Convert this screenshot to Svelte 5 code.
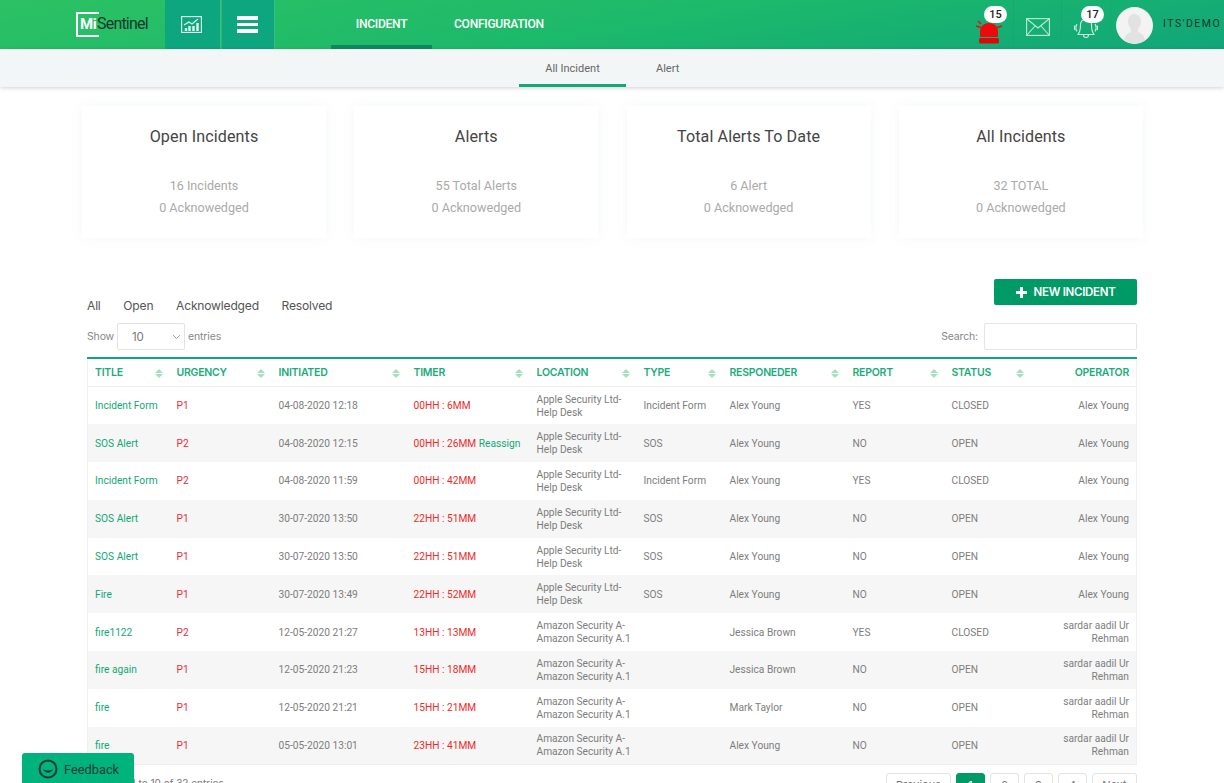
<script>
  const cards = [
    { t: 'Open Incidents', a: '16 Incidents', b: '0 Acknowedged' },
    { t: 'Alerts', a: '55 Total Alerts', b: '0 Acknowedged' },
    { t: 'Total Alerts To Date', a: '6 Alert', b: '0 Acknowedged' },
    { t: 'All Incidents', a: '32 TOTAL', b: '0 Acknowedged' }
  ];
  const heads = ['TITLE', 'URGENCY', 'INITIATED', 'TIMER', 'LOCATION', 'TYPE', 'RESPONEDER', 'REPORT', 'STATUS'];
  const A = 'Apple Security Ltd-Help Desk';
  const Z = 'Amazon Security A-Amazon Security A.1';
  const S = 'sardar aadil Ur Rehman';
  const rows = [
    ['Incident Form', 'P1', '04-08-2020 12:18', '00HH : 6MM', A, 'Incident Form', 'Alex Young', 'YES', 'CLOSED', 'Alex Young'],
    ['SOS Alert', 'P2', '04-08-2020 12:15', '00HH : 26MM', A, 'SOS', 'Alex Young', 'NO', 'OPEN', 'Alex Young', true],
    ['Incident Form', 'P2', '04-08-2020 11:59', '00HH : 42MM', A, 'Incident Form', 'Alex Young', 'YES', 'CLOSED', 'Alex Young'],
    ['SOS Alert', 'P1', '30-07-2020 13:50', '22HH : 51MM', A, 'SOS', 'Alex Young', 'NO', 'OPEN', 'Alex Young'],
    ['SOS Alert', 'P1', '30-07-2020 13:50', '22HH : 51MM', A, 'SOS', 'Alex Young', 'NO', 'OPEN', 'Alex Young'],
    ['Fire', 'P1', '30-07-2020 13:49', '22HH : 52MM', A, 'SOS', 'Alex Young', 'NO', 'OPEN', 'Alex Young'],
    ['fire1122', 'P2', '12-05-2020 21:27', '13HH : 13MM', Z, '', 'Jessica Brown', 'YES', 'CLOSED', S],
    ['fire again', 'P1', '12-05-2020 21:23', '15HH : 18MM', Z, '', 'Jessica Brown', 'NO', 'OPEN', S],
    ['fire', 'P1', '12-05-2020 21:21', '15HH : 21MM', Z, '', 'Mark Taylor', 'NO', 'OPEN', S],
    ['fire', 'P1', '05-05-2020 13:01', '23HH : 41MM', Z, '', 'Alex Young', 'NO', 'OPEN', S]
  ];
</script>

<div class="page">
  <header class="top">
    <div class="logo">
      <span class="mark">Mi</span><span class="word">Sentinel</span>
    </div>
    <div class="square first">
      <svg width="21" height="17" viewBox="0 0 21 17" fill="none" stroke="#e6f7f0" stroke-width="1.1">
        <rect x="0.6" y="0.6" width="19.8" height="15.8" />
        <path d="M3 9 L8 6 L11 8 L17 3" />
        <path d="M5 15v-3M8.500 15v-5M12.500 15v-5M16.500 15v-8" stroke-width="2.400" />
      </svg>
    </div>
    <div class="square second">
      <span class="burger"><i></i><i></i><i></i></span>
    </div>
    <nav class="mainnav">
      <a class="active">INCIDENT</a>
      <a class="config">CONFIGURATION</a>
    </nav>
    <div class="right">
      <div class="ic siren">
        <svg width="26" height="24" viewBox="0 0 26 24">
          <path d="M4 17v-6a9 8 0 0 1 18 0v6z" fill="#ee0a0a" />
          <rect x="3" y="18" width="20" height="5.500" rx="1.500" fill="#d80a0a" />
          <path d="M0 6l5 1.500M2 1l3 3M26 6l-5 1.500" stroke="#ee0a0a" stroke-width="1.400" fill="none" />
        </svg>
        <span class="badge b1">15</span>
      </div>
      <div class="ic mail">
        <svg width="24" height="18" viewBox="0 0 24 18" fill="none" stroke="#b9ecd4" stroke-width="1.100">
          <rect x="0.600" y="0.600" width="22.800" height="16.800" />
          <path d="M1 1l11 9 11-9M1 17l8-9M23 17l-8-9" />
        </svg>
      </div>
      <div class="ic bell">
        <svg width="24" height="21" viewBox="0 0 24 21" fill="none" stroke="#cdf2e0" stroke-width="1.100">
          <path d="M12 1a5.500 5.500 0 0 0-5.500 5.500c0 6-1 8-2.500 10h16c-1.500-2-2.500-4-2.500-10A5.500 5.500 0 0 0 12 1zM9.500 17a2.500 2.500 0 0 0 5 0" />
          <path d="M3 6c-1.500 2.500-1.500 5 0 7.500M21 6c1.500 2.500 1.500 5 0 7.500M1 7.500c-.8 1.500-.8 3 0 4.500M23 7.500c.8 1.500.8 3 0 4.500" />
        </svg>
        <span class="badge b2">17</span>
      </div>
      <div class="user">
        <span class="avatar">
          <svg width="37" height="37" viewBox="0 0 37 37">
            <circle cx="18.500" cy="18.500" r="18.500" fill="#f3f3f3" />
            <path d="M8 33c1-6 5-7 7-8v-3c-2-2-3-5-3-8 0-4 3-7 6.500-7s6.500 3 6.500 7c0 3-1 6-3 8v3c2 1 6 2 7 8a18 18 0 0 1-21 0z" fill="#e2e2e2" />
          </svg>
        </span>
        <span class="uname">ITS'DEMO</span>
      </div>
    </div>
  </header>

  <div class="subnav">
    <a class="sub active">All Incident</a>
    <a class="sub alert">Alert</a>
  </div>

  <main>
    <section class="cards">
      {#each cards as c}
        <div class="card">
          <h3>{c.t}</h3>
          <p>{c.a}</p>
          <p>{c.b}</p>
        </div>
      {/each}
    </section>

    <div class="filters">
      <div class="tabs">
        <span>All</span><span>Open</span><span>Acknowledged</span><span>Resolved</span>
      </div>
      <button class="new"><span class="plus"></span>NEW INCIDENT</button>
    </div>

    <div class="controls">
      <div class="show">
        Show
        <span class="select">10
          <svg width="9" height="6" viewBox="0 0 9 6" fill="none" stroke="#aaa"><path d="M1 1l3.500 3.500L8 1" /></svg>
        </span>
        entries
      </div>
      <div class="search">Search:<span class="input"></span></div>
    </div>

    <table>
      <colgroup>
        <col style="width:82px" /><col style="width:102px" /><col style="width:135px" /><col style="width:123px" /><col style="width:107px" /><col style="width:86px" /><col style="width:123px" /><col style="width:99px" /><col style="width:86px" /><col />
      </colgroup>
      <thead>
        <tr>
          {#each heads as h}
            <th>{h}<span class="sort"><i class="up"></i><i class="down"></i></span></th>
          {/each}
          <th class="r">OPERATOR</th>
        </tr>
      </thead>
      <tbody>
        {#each rows as r}
          <tr>
            <td class="title">{r[0]}</td>
            <td class="urg">{r[1]}</td>
            <td>{r[2]}</td>
            <td class="timer">{r[3]}{#if r[10]}&nbsp;<span class="title">Reassign</span>{/if}</td>
            <td class="loc">{r[4]}</td>
            <td>{r[5]}</td>
            <td>{r[6]}</td>
            <td>{r[7]}</td>
            <td>{r[8]}</td>
            <td class="r">{r[9]}</td>
          </tr>
        {/each}
      </tbody>
    </table>

    <div class="foot">
      <span class="info">Showing 1 to 10 of 32 entries</span>
      <div class="pager">
        <span class="pg prev">Previous</span>
        <span class="pg cur">1</span>
        <span class="pg">2</span>
        <span class="pg">3</span>
        <span class="pg">4</span>
        <span class="pg next">Next</span>
      </div>
    </div>
  </main>

  <div class="feedback">
    <svg width="20" height="20" viewBox="0 0 20 20" fill="none">
      <circle cx="10" cy="10" r="8.500" stroke="#1f3b3a" stroke-width="2" />
      <path d="M5 10c2 5 8 5 10 0-3 2-7 2-10 0z" fill="#1f3b3a" />
    </svg>
    Feedback
  </div>
</div>

<style>
  :global(body) {
    margin: 0;
    background: #fff;
    overflow: hidden;
  }
  .page {
    height: 783px;
    overflow: hidden;
    position: relative;
    font-family: Roboto, "Liberation Sans", sans-serif;
    color: #777;
  }
  .top {
    height: 49px;
    display: flex;
    align-items: stretch;
    background: linear-gradient(170deg, #2cc163 0%, #1db96b 50%, #10a67a 100%);
  }
  .logo {
    width: 165px;
    box-sizing: border-box;
    padding: 11px 0 0 76px;
    display: flex;
    align-items: flex-start;
    flex: none;
  }
  .logo .mark {
    box-sizing: border-box;
    width: 23px;
    height: 25px;
    margin-top: 1px;
    border: 2px solid #fff;
    border-right: 0;
    color: #fff;
    font-weight: 700;
    font-size: 15px;
    line-height: 21px;
    padding-left: 2px;
    letter-spacing: -0.5px;
    white-space: nowrap;
  }
  .logo .word {
    color: #16392c;
    margin-left: -2px;
    font-size: 16px;
    line-height: 26px;
    letter-spacing: -0.8px;
  }
  .square {
    background: #0ea67f;
    display: flex;
    align-items: center;
    justify-content: center;
    box-sizing: border-box;
    flex: none;
    border-right: 1px solid #3dbb8a;
  }
  .square.first { width: 56px; padding-right: 2px; }
  .square.second { width: 53px; padding-right: 2px; margin-left: 1px; }
  .burger { display: flex; flex-direction: column; gap: 3px; }
  .burger i { display: block; width: 21px; height: 3.500px; background: #fff; }
  .mainnav {
    display: flex;
    margin-left: 56px;
    color: #fff;
    font-size: 12.100px;
    font-weight: 500;
  }
  .mainnav a {
    display: block;
    box-sizing: border-box;
    height: 49px;
    line-height: 49px;
    letter-spacing: -0.3px;
    white-space: nowrap;
  }
  .mainnav .active {
    width: 101px;
    text-align: center;
    border-bottom: 4px solid #0c8a5d;
  }
  .mainnav .config { margin-left: 22px; }
  .right {
    margin-left: auto;
    display: flex;
    align-items: stretch;
  }
  .ic {
    position: relative;
    display: flex;
    align-items: center;
    justify-content: center;
    box-sizing: border-box;
    border-right: 1px solid #17a86b;
  }
  .siren { width: 46px; }
  .siren svg { margin-top: 15px; margin-left: -4px; }
  .mail { width: 48px; }
  .mail svg { margin-top: 4px; }
  .bell { width: 49px; }
  .bell svg { margin-top: 7px; }
  .badge {
    position: absolute;
    top: 6px;
    background: #fff;
    color: #222;
    font-size: 11px;
    font-weight: 500;
    width: 23px;
    height: 17px;
    line-height: 17px;
    text-align: center;
    border-radius: 9px;
  }
  .b1 { left: 16px; }
  .b2 { left: 19px; }
  .user {
    width: 113px;
    display: flex;
    align-items: center;
    padding-left: 5px;
    overflow: hidden;
    box-sizing: border-box;
  }
  .avatar { display: block; width: 37px; height: 37px; margin-top: 2px; flex: none; }
  .uname {
    margin-left: 10px;
    color: #14362c;
    font-size: 10.500px;
    letter-spacing: 1.500px;
    white-space: nowrap;
    margin-top: -3px;
  }
  .subnav {
    height: 38px;
    background: #f3f6f7;
    box-shadow: 0 1px 4px rgba(0,0,0,.18);
    display: flex;
    padding-left: 519px;
    position: relative;
    font-size: 11px;
    color: #666;
  }
  .sub {
    display: block;
    box-sizing: border-box;
    height: 38px;
    line-height: 39px;
    text-align: center;
  }
  .sub.active { width: 107px; border-bottom: 3px solid #12a87a; }
  .sub.alert { margin-left: 30px; }
  main { padding: 19px 87px 0 88px; }
  .cards {
    display: grid;
    grid-template-columns: repeat(4, 244px);
    gap: 28.300px;
    margin-left: -6px;
  }
  .card {
    height: 132px;
    background: #fff;
    box-shadow: 0 0 14px rgba(20,120,90,.05);
    text-align: center;
    box-sizing: border-box;
    padding-top: 20px;
  }
  .card h3 {
    margin: 0 0 27px;
    font-size: 16.100px;
    font-weight: 400;
    line-height: 22px;
    color: #444;
    letter-spacing: .1px;
  }
  .card p {
    margin: 0;
    font-size: 12.600px;
    line-height: 22px;
    color: #aaa;
  }
  .filters {
    margin-top: 41px;
    display: flex;
    justify-content: space-between;
    align-items: flex-start;
    height: 44px;
  }
  .tabs {
    display: flex;
    gap: 22.700px;
    font-family: Inter, "Liberation Sans", sans-serif;
    font-size: 12.100px;
    color: #555;
    padding-top: 19px;
    margin-left: -1px;
    letter-spacing: -0.2px;
  }
  .new {
    width: 143px;
    height: 26px;
    background: #009a66;
    color: #fff;
    border: 0;
    border-radius: 2px;
    font: 600 11.500px Inter, "Liberation Sans", sans-serif;
    letter-spacing: -0.3px;
    display: flex;
    align-items: center;
    justify-content: center;
    gap: 7px;
    padding: 0;
  }
  .plus {
    width: 11px;
    height: 11px;
    background:
      linear-gradient(#fff,#fff) center/11px 3px no-repeat,
      linear-gradient(#fff,#fff) center/3px 11px no-repeat;
  }
  .controls {
    display: flex;
    justify-content: space-between;
    align-items: center;
    height: 27px;
    font-family: Inter, "Liberation Sans", sans-serif;
    font-size: 10.500px;
    color: #888;
    letter-spacing: -0.15px;
  }
  .show { display: flex; align-items: center; gap: 3px; margin-left: -1px; }
  .select {
    box-sizing: border-box;
    width: 68px;
    height: 27px;
    border: 1px solid #e3e3e3;
    border-radius: 2px;
    padding-left: 14px;
    display: flex;
    align-items: center;
    justify-content: space-between;
    padding-right: 3px;
    font-size: 11.500px;
    color: #777;
  }
  .search { display: flex; align-items: center; gap: 6px; }
  .input {
    display: block;
    box-sizing: border-box;
    width: 153px;
    height: 27px;
    border: 1px solid #e5e5e5;
    border-radius: 2px;
    background: #fff;
  }
  table {
    width: 1050px;
    margin: 7px 0 0 -1px;
    table-layout: fixed;
    border-collapse: collapse;
    border-top: 2px solid #12a875;
    border-left: 1px solid #f0f0f0;
    border-right: 1px solid #f0f0f0;
    font-family: Roboto, "Liberation Sans", sans-serif;
    font-size: 10.200px;
    color: #7d7d7d;
  }
  th {
    height: 27px;
    padding: 0 7px;
    text-align: left;
    color: #1cab7a;
    font-family: Inter, "Liberation Sans", sans-serif;
    font-size: 10.500px;
    font-weight: 600;
    position: relative;
    border-bottom: 1px solid #ececec;
    letter-spacing: -0.25px;
    white-space: nowrap;
  }
  td {
    height: 37.800px;
    box-sizing: border-box;
    padding: 0 7px;
    line-height: 13px;
  }
  td.loc { padding-right: 0; }
  tbody tr:nth-child(even) td { background: #f6f6f6; }
  .r { text-align: right; }
  td.title, span.title { color: #12a875; }
  td.urg { color: #ee2a3a; }
  td.timer { color: #f02a2a; white-space: nowrap; }
  tbody tr:last-child td { border-bottom: 1px solid #eee; }
  .sort {
    position: absolute;
    right: 7px;
    top: 10px;
    display: flex;
    flex-direction: column;
    gap: 1px;
  }
  .sort i {
    display: block;
    width: 0;
    height: 0;
    border-left: 4px solid transparent;
    border-right: 4px solid transparent;
  }
  .sort .up { border-bottom: 4.500px solid #a5e0c3; }
  .sort .down { border-top: 4.500px solid #a5e0c3; }
  .foot {
    display: flex;
    justify-content: space-between;
    margin-top: 8px;
    font-family: Inter, "Liberation Sans", sans-serif;
    font-size: 10px;
    color: #777;
  }
  .info { padding-top: 4px; }
  .pager { display: flex; gap: 5px; font-size: 11px; }
  .pg {
    box-sizing: border-box;
    width: 29px;
    height: 28px;
    line-height: 22px;
    border: 1px solid #e3e3e3;
    border-radius: 3px;
    text-align: center;
    background: #fff;
  }
  .pg.prev { width: 65px; }
  .pg.next { width: 45px; }
  .pg.cur { background: #009a66; border-color: #009a66; color: #fff; }
  .feedback {
    position: absolute;
    left: 22px;
    bottom: 0;
    width: 112px;
    height: 30px;
    background: #00b27c;
    border-radius: 3px 3px 0 0;
    display: flex;
    align-items: center;
    gap: 6px;
    box-sizing: border-box;
    padding-left: 16px;
    padding-top: 2px;
    font-size: 12.800px;
    color: #1f3b3a;
  }
</style>
